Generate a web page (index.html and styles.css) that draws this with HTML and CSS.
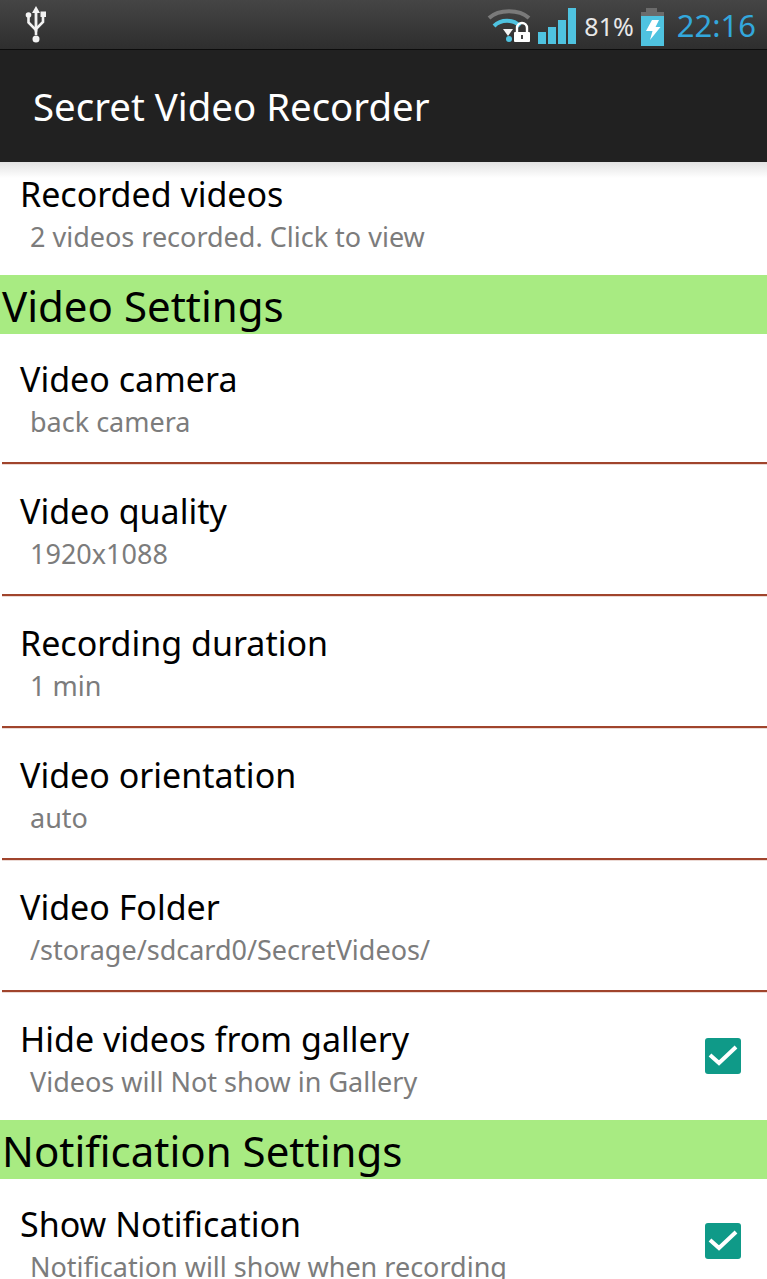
FILE: index.html
```html
<!DOCTYPE html>
<html lang="en">
<head>
  <meta charset="UTF-8" />
  <title>Secret Video Recorder</title>
  <link rel="stylesheet" href="styles.css">
</head>
<body>
  <div class="statusbar">
    <svg class="icon-usb" width="26" height="38" viewBox="0 0 26 38">
      <path d="M13 1l4 7h-2.600v18.500h-2.800V8H9z" fill="#f2f2f2"/>
      <path d="M13 30V25L5.500 17.500V11M13 24l7-7v-6" fill="none" stroke="#f2f2f2" stroke-width="2.600"/>
      <circle cx="5.500" cy="10" r="2.800" fill="#f2f2f2"/>
      <rect x="17.500" y="6.500" width="5.500" height="5.500" fill="#f2f2f2"/>
      <circle cx="13" cy="34" r="3.500" fill="#f2f2f2"/>
    </svg>
    <div class="status-right">
      <svg class="icon-wifi" width="44" height="36" viewBox="0 0 44 36">
        <path d="M2 10C12 1 32 1 42 10" fill="none" stroke="#7a7a7a" stroke-width="4"/>
        <path d="M7 18C14 11 26 11 33 18" fill="none" stroke="#4fc3e0" stroke-width="4"/>
        <path d="M16 21h10l-5 7z" fill="#f4f4f4"/>
        <circle cx="22" cy="31" r="3" fill="#4fc3e0"/>
        <path d="M30 24v-4a5 5 0 0 1 10 0v4" fill="none" stroke="#fff" stroke-width="2.400"/>
        <rect x="27" y="24" width="16" height="10" rx="1" fill="#fff"/>
        <rect x="34" y="27" width="2" height="4" fill="#444"/>
      </svg>
      <div class="signal">
        <span class="bar bar1"></span>
        <span class="bar bar2"></span>
        <span class="bar bar3"></span>
        <span class="bar bar4"></span>
      </div>
      <span class="battery-text">81%</span>
      <svg class="icon-battery" width="23" height="38" viewBox="0 0 23 38">
        <rect x="5" y="0" width="11" height="4" fill="#6b6b6b"/>
        <rect x="0" y="4" width="23" height="4" fill="#6b6b6b"/>
        <rect x="0" y="8" width="23" height="30" fill="#4fc3e0"/>
        <path d="M11 12h7l-3.500 7h5L9 32l2.500-9H5z" fill="#fff"/>
      </svg>
      <span class="clock">22:16</span>
    </div>
  </div>

  <div class="actionbar">Secret Video Recorder</div>

  <div class="list">
    <div class="row row-first">
      <div class="row-text">
        <div class="row-title">Recorded videos</div>
        <div class="row-sub">2 videos recorded. Click to view</div>
      </div>
    </div>

    <div class="section">Video Settings</div>

    <div class="row">
      <div class="row-text">
        <div class="row-title">Video camera</div>
        <div class="row-sub">back camera</div>
      </div>
    </div>
    <div class="row">
      <div class="row-text">
        <div class="row-title">Video quality</div>
        <div class="row-sub">1920x1088</div>
      </div>
    </div>
    <div class="row">
      <div class="row-text">
        <div class="row-title">Recording duration</div>
        <div class="row-sub">1 min</div>
      </div>
    </div>
    <div class="row">
      <div class="row-text">
        <div class="row-title">Video orientation</div>
        <div class="row-sub">auto</div>
      </div>
    </div>
    <div class="row">
      <div class="row-text">
        <div class="row-title">Video Folder</div>
        <div class="row-sub">/storage/sdcard0/SecretVideos/</div>
      </div>
    </div>
    <div class="row row-last">
      <div class="row-text">
        <div class="row-title">Hide videos from gallery</div>
        <div class="row-sub">Videos will Not show in Gallery</div>
      </div>
      <svg class="check" width="36" height="36" viewBox="0 0 36 36">
        <rect width="36" height="36" rx="3" fill="#0f9a88"/>
        <path d="M5 17l9 8L31 9" fill="none" stroke="#fff" stroke-width="4"/>
      </svg>
    </div>

    <div class="section">Notification Settings</div>

    <div class="row row-last">
      <div class="row-text">
        <div class="row-title">Show Notification</div>
        <div class="row-sub">Notification will show when recording</div>
      </div>
      <svg class="check" width="36" height="36" viewBox="0 0 36 36">
        <rect width="36" height="36" rx="3" fill="#0f9a88"/>
        <path d="M5 17l9 8L31 9" fill="none" stroke="#fff" stroke-width="4"/>
      </svg>
    </div>
  </div>
</body>
</html>
```

FILE: styles.css
```css
html, body {
  margin: 0;
  height: 100%;
  overflow: hidden;
  background-color: #fff;
}

body {
  font-family: 'Noto Sans', sans-serif;
}

.statusbar {
  height: 49px;
  display: flex;
  align-items: center;
  justify-content: space-between;
  padding: 0 11px 0 23px;
  background: linear-gradient(#454545, #2e2e2e);
  border-bottom: 1px solid #0c0c0c;
}

.icon-usb {
  display: block;
  margin-top: -2px;
}

.status-right {
  display: flex;
  align-items: center;
}

.icon-wifi {
  display: block;
  margin-top: 3px;
}

.signal {
  display: flex;
  align-items: flex-end;
  gap: 2px;
  height: 36px;
  margin: 3px 8px 0 7px;
}

.bar {
  width: 8px;
  background-color: #4fc3e0;
}

.bar1 { height: 12px; }
.bar2 { height: 17px; }
.bar3 { height: 24px; }
.bar4 { height: 36px; }

.battery-text {
  font-size: 25px;
  color: #e8e8e8;
  margin-right: 7px;
  margin-top: 2px;
}

.icon-battery {
  display: block;
  margin-top: 4px;
}

.clock {
  font-size: 31px;
  color: #33a7dc;
  margin-left: 13px;
  margin-top: 1px;
}

.actionbar {
  height: 112px;
  box-sizing: border-box;
  display: flex;
  align-items: center;
  padding-left: 33px;
  font-size: 38.400px;
  color: #fff;
  background-color: #212121;
}

.list {
  background: linear-gradient(#e2e2e2, #fff 16px) no-repeat;
}

.row {
  height: 130px;
  box-sizing: border-box;
  display: flex;
  align-items: flex-start;
  justify-content: space-between;
  margin: 0 0 2px 2px;
  padding: 23px 26px 0 18px;
  border-bottom: 2px solid #a0442c;
  box-shadow: 0 1px 0 rgba(160, 68, 44, 0.2);
}

.row-first {
  height: 113px;
  margin-bottom: 0;
  padding-top: 10px;
  border-bottom: none;
  box-shadow: none;
}

.row-last {
  height: 126px;
  margin-bottom: 0;
  border-bottom: none;
  box-shadow: none;
}

.row-title {
  font-size: 34px;
  line-height: 44px;
  color: #000;
}

.row-sub {
  font-size: 27px;
  line-height: 36px;
  margin-top: 3px;
  padding-left: 10px;
  color: #7c7c7c;
  white-space: nowrap;
}

.check {
  display: block;
  margin-top: 21px;
}

.section {
  height: 59px;
  line-height: 62px;
  padding-left: 2px;
  font-size: 42px;
  color: #000;
  background-color: #a8eb82;
}
```
